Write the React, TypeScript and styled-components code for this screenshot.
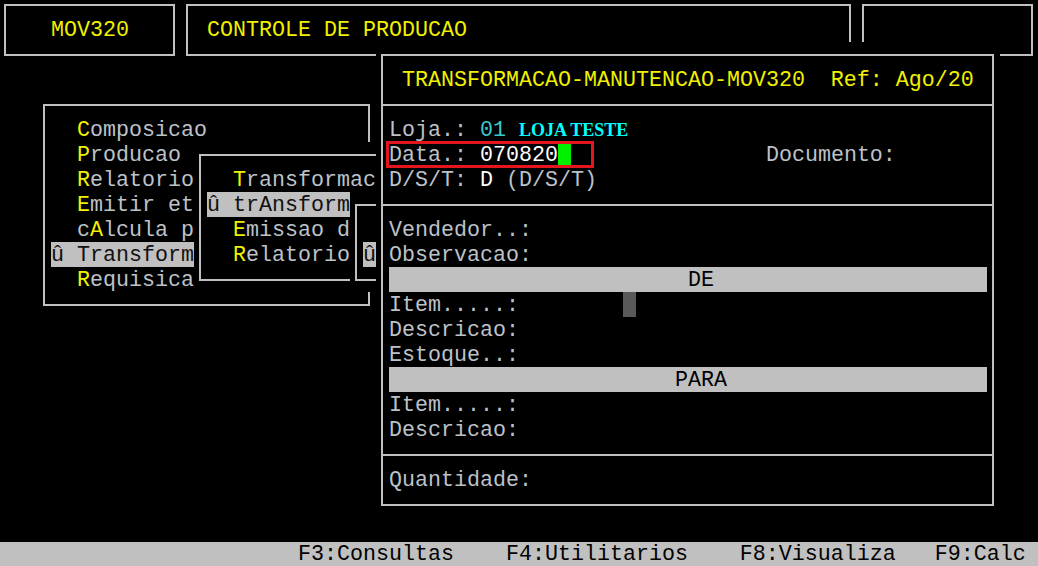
import React from "react";
import styled, { createGlobalStyle } from "styled-components";

const CW = 13;
const RH = 25;

const Global = createGlobalStyle`
  html, body { margin: 0; padding: 0; background: #000; }
  #root { width: 1038px; height: 566px; }
`;

const Screen = styled.div`
  width: 1038px;
  height: 566px;
  background: #000;
  display: flex;
  flex-direction: column;
  overflow: hidden;
  font-family: "Liberation Mono", "DejaVu Sans Mono", monospace;
  font-size: 21.667px;
  color: #bcc2c8;
`;

const Desktop = styled.div`
  position: relative;
  flex: 1;
  overflow: hidden;
`;

const StatusBar = styled.div`
  flex: none;
  height: 24px;
  line-height: 25px;
  background: #c0c0c0;
  color: #000;
  white-space: pre;
  padding-left: ${23 * CW - 1}px;
`;

const Window = styled.div<{ $col: number; $row: number; $cols: number; $rows: number }>`
  position: absolute;
  left: ${(p) => p.$col * CW - 1}px;
  top: ${(p) => p.$row * RH - 8}px;
  width: ${(p) => p.$cols * CW}px;
  height: ${(p) => p.$rows * RH}px;
  background: #000;
`;

const Frame = styled.div`
  position: absolute;
  top: 12px;
  left: 5px;
  right: 6px;
  bottom: 11px;
  border: 2px solid #c0c0c0;
`;

const Body = styled.div<{ $skip: number }>`
  position: relative;
  display: flex;
  flex-direction: column;
  padding-top: ${(p) => p.$skip * RH}px;
`;

const Line = styled.div<{ $indent?: number }>`
  height: ${RH}px;
  line-height: ${RH + 2}px;
  white-space: pre;
  padding-left: ${(p) => (p.$indent ?? 0) * CW}px;
`;

const Rule = styled.div`
  position: relative;
  height: ${RH}px;
  &::after {
    content: "";
    position: absolute;
    left: 5px;
    right: 6px;
    top: 12px;
    height: 2px;
    background: #c0c0c0;
  }
`;

const Band = styled.div<{ $labelCol: number }>`
  box-sizing: border-box;
  margin-left: ${CW}px;
  width: ${46 * CW}px;
  height: ${RH}px;
  line-height: ${RH + 2}px;
  background: #c0c0c0;
  color: #000;
  white-space: pre;
  padding-left: ${(p) => p.$labelCol * CW}px;
`;

const Hot = styled.span`
  color: #f0f000;
`;

const Value = styled.span`
  color: #ffffff;
`;

const Code = styled.span`
  color: #38cccc;
`;

const StoreName = styled.span`
  font-family: "Liberation Serif", "Times New Roman", serif;
  font-weight: bold;
  font-size: 18px;
  line-height: 1;
  color: #00ffff;
`;

const Selected = styled.span`
  display: inline-block;
  vertical-align: top;
  height: ${RH}px;
  background: #c0c0c0;
  color: #111;
`;

const Cursor = styled.span<{ $color: string }>`
  display: inline-block;
  vertical-align: top;
  width: ${CW}px;
  height: ${RH}px;
  background: ${(p) => p.$color};
`;

const Annotation = styled.div`
  position: absolute;
  left: 386px;
  top: 141px;
  width: 208px;
  height: 27px;
  box-sizing: border-box;
  border: 3px solid #e3161d;
`;

type Item = { hot: number; text: string };

const MenuLine: React.FC<{ item: Item; indent: number }> = ({ item, indent }) => (
  <Line $indent={indent}>
    {item.text.slice(0, item.hot)}
    <Hot>{item.text.charAt(item.hot)}</Hot>
    {item.text.slice(item.hot + 1)}
  </Line>
);

const mainMenu: Item[] = [
  { hot: 0, text: "Composicao" },
  { hot: 0, text: "Producao" },
  { hot: 0, text: "Relatorio" },
  { hot: 0, text: "Emitir et" },
  { hot: 1, text: "cAlcula p" },
];

export default function App() {
  return (
    <>
      <Global />
      <Screen>
        <Desktop>
          <Window $col={0} $row={0} $cols={14} $rows={3}>
            <Frame />
            <Body $skip={1}>
              <Line $indent={4}>
                <Hot>MOV320</Hot>
              </Line>
            </Body>
          </Window>

          <Window $col={14} $row={0} $cols={52} $rows={3}>
            <Frame />
            <Body $skip={1}>
              <Line $indent={2}>
                <Hot>CONTROLE DE PRODUCAO</Hot>
              </Line>
            </Body>
          </Window>

          <Window $col={66} $row={0} $cols={14} $rows={3}>
            <Frame />
          </Window>

          <Window $col={3} $row={4} $cols={26} $rows={9}>
            <Frame />
            <Body $skip={1}>
              {mainMenu.map((it) => (
                <MenuLine key={it.text} item={it} indent={3} />
              ))}
              <Line $indent={1}>
                <Selected>û Transform</Selected>
              </Line>
              <MenuLine item={{ hot: 0, text: "Requisica" }} indent={3} />
            </Body>
          </Window>

          <Window $col={15} $row={6} $cols={20} $rows={6}>
            <Frame />
            <Body $skip={1}>
              <MenuLine item={{ hot: 0, text: "Transformac" }} indent={3} />
              <Line $indent={1}>
                <Selected>û trAnsform</Selected>
              </Line>
              <MenuLine item={{ hot: 0, text: "Emissao d" }} indent={3} />
              <MenuLine item={{ hot: 0, text: "Relatorio" }} indent={3} />
            </Body>
          </Window>

          <Window $col={27} $row={8} $cols={8} $rows={4}>
            <Frame />
            <Body $skip={2}>
              <Line $indent={1}>
                <Selected>û</Selected>
              </Line>
            </Body>
          </Window>

          <Window $col={29} $row={2} $cols={48} $rows={19}>
            <Frame />
            <Body $skip={1}>
              <Line $indent={2}>
                <Hot>TRANSFORMACAO-MANUTENCAO-MOV320  Ref: Ago/20</Hot>
              </Line>
              <Rule />
              <Line $indent={1}>
                {"Loja.: "}
                <Code>01</Code> <StoreName>LOJA TESTE</StoreName>
              </Line>
              <Line $indent={1}>
                {"Data.: "}
                <Value>070820</Value>
                <Cursor $color="#00f000" />
                {"               Documento:"}
              </Line>
              <Line $indent={1}>
                {"D/S/T: "}
                <Value>D</Value>
                {" (D/S/T)"}
              </Line>
              <Rule />
              <Line $indent={1}>Vendedor..:</Line>
              <Line $indent={1}>Observacao:</Line>
              <Band $labelCol={23}>DE</Band>
              <Line $indent={1}>
                {"Item.....:        "}
                <Cursor $color="#595959" />
              </Line>
              <Line $indent={1}>Descricao:</Line>
              <Line $indent={1}>Estoque..:</Line>
              <Band $labelCol={22}>PARA</Band>
              <Line $indent={1}>Item.....:</Line>
              <Line $indent={1}>Descricao:</Line>
              <Rule />
              <Line $indent={1}>Quantidade:</Line>
            </Body>
          </Window>

          <Annotation />
        </Desktop>
        <StatusBar>{"F3:Consultas    F4:Utilitarios    F8:Visualiza   F9:Calc"}</StatusBar>
      </Screen>
    </>
  );
}
